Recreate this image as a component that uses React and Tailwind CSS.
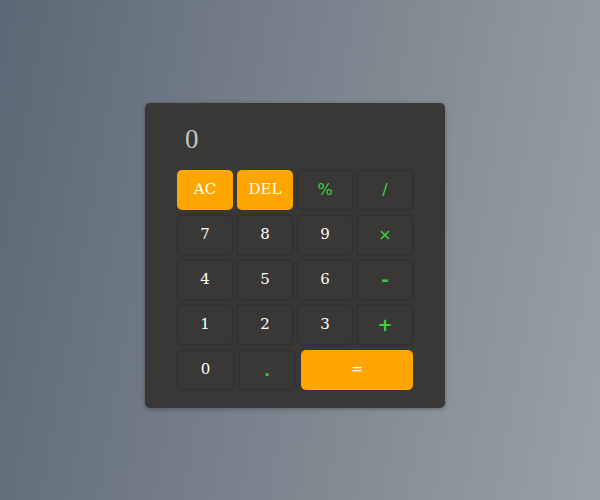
export default function App() {
  const base = "h-10 rounded-[5px] flex items-center justify-center";
  const dark = base + " bg-[#3a3836] border border-[#343230] shadow-[0_0_2px_rgba(0,0,0,0.3)]";
  const num = dark + " text-white text-[15px] font-['DejaVu_Serif',serif]";
  const op = dark + " text-[#3ccf3c] font-['DejaVu_Sans',sans-serif]";
  const orange = base + " rounded-[4px] bg-[#ffa500] text-white";
  return (
    <div className="w-[600px] h-[500px] flex items-center justify-center pr-[10px] pt-[10px] bg-[linear-gradient(100deg,#5b6875_0%,#9aa1a7_100%)]">
      <div className="w-[300px] h-[305px] rounded-[5px] bg-[#3a3836] shadow-[0_1px_4px_rgba(0,0,0,0.3)] px-8 flex flex-col">
        <div className="h-[67px] flex items-center pl-2 pt-[6px] text-[27px] text-[#c4c4c4] font-['Liberation_Serif',serif]">0</div>
        <div className="grid grid-cols-4 gap-x-1 gap-y-[5px]">
          <button className={orange + " text-[15px] font-['DejaVu_Serif',serif]"}>AC</button>
          <button className={orange + " text-[15px] font-['DejaVu_Serif',serif]"}>DEL</button>
          <button className={op + " text-[16px]"}>%</button>
          <button className={op + " text-[16px]"}>/</button>
          <button className={num}>7</button>
          <button className={num}>8</button>
          <button className={num}>9</button>
          <button className={op + " text-[16px]"}>×</button>
          <button className={num}>4</button>
          <button className={num}>5</button>
          <button className={num}>6</button>
          <button className={op + " text-[18px] font-bold"}>-</button>
          <button className={num}>1</button>
          <button className={num}>2</button>
          <button className={num}>3</button>
          <button className={op + " text-[18px] font-bold"}>+</button>
        </div>
        <div className="flex mt-[5px] gap-[5px]">
          <button className={num + " w-[57px]"}>0</button>
          <button className={op + " w-[56px] text-[15px] font-bold pt-1"}>.</button>
          <button className={orange + " ml-[1px] flex-1 text-[14px] font-['DejaVu_Sans',sans-serif]"}>=</button>
        </div>
      </div>
    </div>
  );
}
